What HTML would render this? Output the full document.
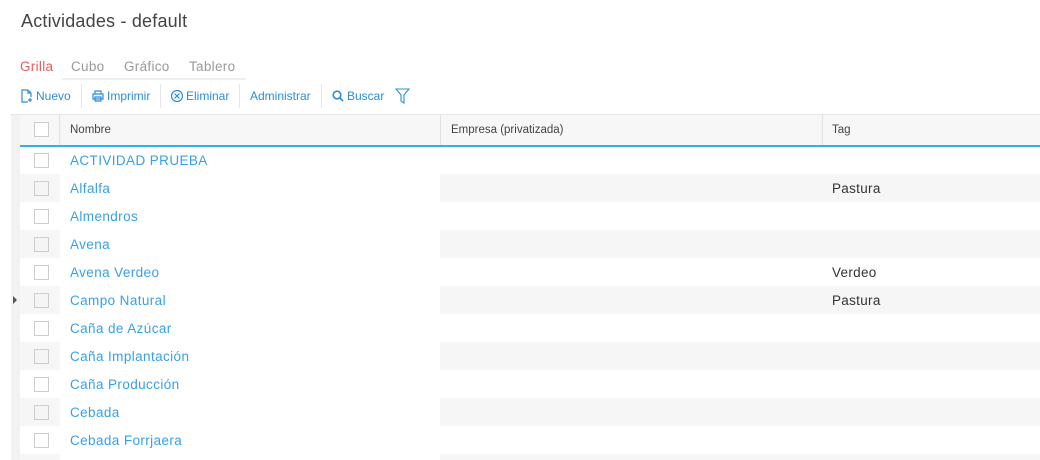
<!DOCTYPE html>
<html style="width:1040px;height:460px;overflow:hidden"><head><meta charset="utf-8"><style>
*{margin:0;padding:0;box-sizing:border-box}
body{width:1040px;height:460px;background:#fff;font-family:"Liberation Sans",sans-serif;position:relative;overflow:hidden}
.a{position:absolute}
.title{left:21px;top:11px;font-size:18px;color:#444;letter-spacing:0.2px}
.tab{top:59px;font-size:13.5px;color:#999;letter-spacing:0.3px}
.tb{top:89px;font-size:12px;color:#2a8fd8;display:flex;align-items:center;gap:2px}
.sep{top:84px;width:1px;height:24px;background:#e6e6e6}
.row{position:absolute;left:20px;width:1020px;height:28px}
.cb{position:absolute;left:14px;top:7px;width:15px;height:15px;border:1px solid #ccc;background:#fff}
.g .cb{background:#f5f5f5}
.g .c0{position:absolute;left:0;top:0;width:40px;height:28px;background:#f6f6f6}
.g .c2{position:absolute;left:420px;top:0;width:600px;height:28px;background:#f6f6f6}
.nm{position:absolute;left:50px;top:7px;font-size:13.5px;color:#37a0ec;letter-spacing:0.4px}
.tg{position:absolute;left:812px;top:7px;font-size:13.5px;color:#333;letter-spacing:0.3px}
</style></head><body>
<div class="a title">Actividades - default</div>
<div class="a tab" style="left:20px;color:#ee5a5a">Grilla</div>
<div class="a tab" style="left:71px">Cubo</div>
<div class="a tab" style="left:124px">Gráfico</div>
<div class="a tab" style="left:189px">Tablero</div>
<div class="a" style="left:62px;top:78px;width:184px;height:2px;background:#eee"></div>

<div class="a tb" style="left:20px"><svg width="14" height="14" viewBox="0 0 14 14" fill="none" stroke="#2a8fd8" stroke-width="1.2"><path d="M8 1H2v12h6M8 1l3 3v4M8 1v3h3M10 9v4M8 11h4"/></svg>Nuevo</div>
<div class="a sep" style="left:81px"></div>
<div class="a tb" style="left:91px"><svg width="14" height="14" viewBox="0 0 14 14" fill="none" stroke="#2a8fd8" stroke-width="1.2"><path d="M4 5V2h6v3M2 5h10v5H2zM4 8h6v4H4z"/></svg>Imprimir</div>
<div class="a sep" style="left:160px"></div>
<div class="a tb" style="left:170px"><svg width="14" height="14" viewBox="0 0 14 14" fill="none" stroke="#2a8fd8" stroke-width="1.2"><circle cx="7" cy="7" r="5.5"/><path d="M4.5 4.5l5 5M9.5 4.5l-5 5"/></svg>Eliminar</div>
<div class="a sep" style="left:239px"></div>
<div class="a tb" style="left:250px">Administrar</div>
<div class="a sep" style="left:321px"></div>
<div class="a tb" style="left:331px"><svg width="14" height="14" viewBox="0 0 14 14" fill="none" stroke="#2a8fd8" stroke-width="1.6"><circle cx="6" cy="6" r="3.8"/><path d="M8.7 8.7L12 12"/></svg>Buscar</div>
<div class="a tb" style="left:395px;top:88px"><svg width="15" height="16" viewBox="0 0 15 16" fill="none" stroke="#2a8fd8" stroke-width="1.1"><path d="M1 1h13L9 7v8L6 13V7z"/></svg></div>

<div class="a" style="left:10px;top:114px;width:1030px;height:1px;background:#e6e6e6"></div>
<div class="a" style="left:11px;top:115px;width:9px;height:345px;background:#f2f2f2"></div>
<div class="a" style="left:20px;top:115px;width:1020px;height:31px;background:#f7f7f7"></div>
<div class="a" style="left:20px;top:145px;width:1020px;height:2px;background:#2bb5e6"></div>
<div class="a" style="left:59px;top:115px;width:1px;height:30px;background:#e2e2e2"></div>
<div class="a" style="left:440px;top:115px;width:1px;height:30px;background:#e2e2e2"></div>
<div class="a" style="left:822px;top:115px;width:1px;height:30px;background:#e2e2e2"></div>
<div class="a" style="left:34px;top:122px;width:15px;height:15px;border:1px solid #ccc;background:#fff"></div>
<div class="a" style="left:70px;top:124px;font-size:11.5px;color:#444">Nombre</div>
<div class="a" style="left:451px;top:124px;font-size:11.5px;color:#444">Empresa (privatizada)</div>
<div class="a" style="left:832px;top:124px;font-size:11.5px;color:#444">Tag</div>

<div class="row" style="top:146px"><div class="cb"></div><div class="nm">ACTIVIDAD PRUEBA</div></div>
<div class="row g" style="top:174px"><div class="c0"></div><div class="c2"></div><div class="cb"></div><div class="nm">Alfalfa</div><div class="tg">Pastura</div></div>
<div class="row" style="top:202px"><div class="cb"></div><div class="nm">Almendros</div></div>
<div class="row g" style="top:230px"><div class="c0"></div><div class="c2"></div><div class="cb"></div><div class="nm">Avena</div></div>
<div class="row" style="top:258px"><div class="cb"></div><div class="nm">Avena Verdeo</div><div class="tg">Verdeo</div></div>
<div class="row g" style="top:286px"><div class="c0"></div><div class="c2"></div><div class="cb"></div><div class="nm">Campo Natural</div><div class="tg">Pastura</div></div>
<div class="row" style="top:314px"><div class="cb"></div><div class="nm">Caña de Azúcar</div></div>
<div class="row g" style="top:342px"><div class="c0"></div><div class="c2"></div><div class="cb"></div><div class="nm">Caña Implantación</div></div>
<div class="row" style="top:370px"><div class="cb"></div><div class="nm">Caña Producción</div></div>
<div class="row g" style="top:398px"><div class="c0"></div><div class="c2"></div><div class="cb"></div><div class="nm">Cebada</div></div>
<div class="row" style="top:426px"><div class="cb"></div><div class="nm">Cebada Forrjaera</div></div>
<div class="row g" style="top:454px;height:6px"><div class="c0" style="height:6px"></div><div class="c2" style="height:6px"></div></div>
<div class="a" style="left:13px;top:296px;width:0;height:0;border-top:4px solid transparent;border-bottom:4px solid transparent;border-left:4px solid #555"></div>
</body></html>
